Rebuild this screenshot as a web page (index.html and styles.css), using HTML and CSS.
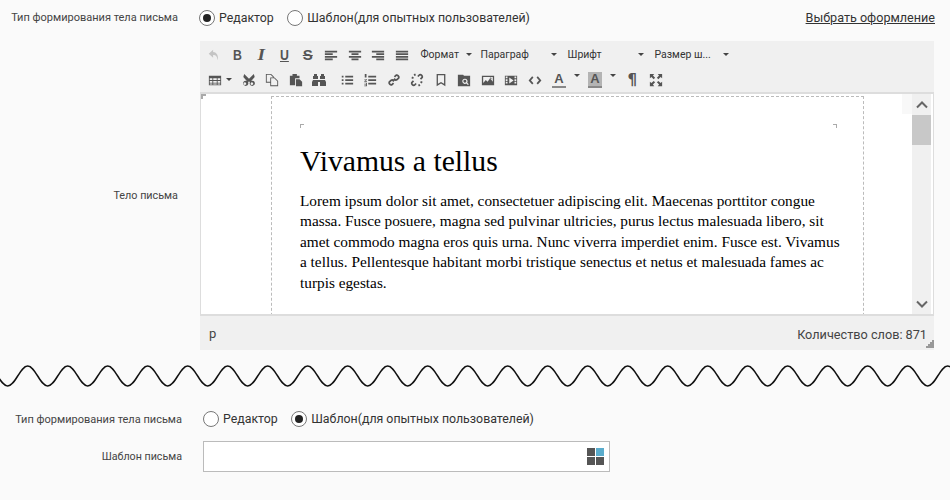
FILE: index.html
```html
<!DOCTYPE html>
<html lang="ru">
<head>
<meta charset="utf-8">
<title>Тело письма</title>
<link rel="stylesheet" href="styles.css">
</head>
<body>
<section class="top">
  <div class="row row-type">
    <div class="label">Тип формирования тела письма</div>
    <label class="radio"><span class="dot on"></span>Редактор</label>
    <label class="radio"><span class="dot"></span>Шаблон(для опытных пользователей)</label>
    <a class="link" href="#">Выбрать оформление</a>
  </div>
  <div class="row row-body">
    <div class="label label-body">Тело письма</div>
    <div class="editor">
      <div class="toolbar">
        <div class="tb-row">
          <span class="btn off"><svg viewBox="0 0 16 16"><path d="M7 2 2 6.500 7 11V8c3 0 4.500 1 5 6 1.500-5-.5-9-5-9.500z"/></svg></span>
          <span class="btn glyph"><b class="narrow">B</b></span>
          <span class="btn glyph"><b class="slant">I</b></span>
          <span class="btn glyph"><b class="u narrow">U</b></span>
          <span class="btn glyph"><b class="s">S</b></span>
          <span class="btn"><svg viewBox="0 0 16 16"><path d="M1 3h14v2H1zM1 6h9v2H1zM1 9h14v2H1zM1 12h9v2H1z"/></svg></span>
          <span class="btn"><svg viewBox="0 0 16 16"><path d="M1 3h14v2H1zM4 6h8v2H4zM1 9h14v2H1zM4 12h8v2H4z"/></svg></span>
          <span class="btn"><svg viewBox="0 0 16 16"><path d="M1 3h14v2H1zM6 6h9v2H6zM1 9h14v2H1zM6 12h9v2H6z"/></svg></span>
          <span class="btn"><svg viewBox="0 0 16 16"><path d="M1 3h14v2H1zM1 6h14v2H1zM1 9h14v2H1zM1 12h14v2H1z"/></svg></span>
          <span class="list list-a">Формат<i class="caret"></i></span>
          <span class="list list-b">Параграф<i class="caret"></i></span>
          <span class="list list-c">Шрифт<i class="caret"></i></span>
          <span class="list list-d">Размер ш...<i class="caret"></i></span>
        </div>
        <div class="tb-row">
          <span class="btn split-t"><svg viewBox="0 0 16 16"><path fill-rule="evenodd" d="M1 3h14v11H1zM2 6v2h3V6zm4 0v2h4V6zm5 0v2h3V6zM2 9v2h3V9zm4 0v2h4V9zm5 0v2h3V9zM2 12v1h3v-1zm4 0v1h4v-1zm5 0v1h3v-1z"/></svg><i class="caret"></i></span>
          <span class="btn"><svg viewBox="0 0 16 16"><path fill-rule="evenodd" d="M2.500 1 8 6.500 13.500 1l1 3.500L10.500 9a3 3 0 1 1-1.500 1.500L8 9.500l-1 1A3 3 0 1 1 5.500 9l-4-4.500zM4 10.800a1.500 1.500 0 1 0 0 2.700 1.500 1.500 0 0 0 0-2.700zm8 0a1.500 1.500 0 1 0 0 2.700 1.500 1.500 0 0 0 0-2.700z"/></svg></span>
          <span class="btn"><svg viewBox="0 0 16 16"><path fill-rule="evenodd" d="M1 1h6l3 3v1h1l4 4v6H6v-4H1zm1 1v8h4V5h3V4.500L6.500 2zm5 4v8h7V9.500L10.500 6z"/></svg></span>
          <span class="btn"><svg viewBox="0 0 16 16"><path d="M1 3h3V1h5v2h3v3H7v8H1z"/><path d="M8 7h4l3 3v5H8z"/></svg></span>
          <span class="btn"><svg class="wide" viewBox="0 0 16 16"><path d="M3 2h3v2h1v3H2v-3h1zM10 2h3v2h1v3H9V4h1zM2 8h5v6H1V10zM9 8h5l1 2v4H9zM7 8h2v2H7z"/></svg></span>
          <span class="btn list-start"><svg viewBox="0 0 16 16"><path d="M6 3h9v2H6zM6 7h9v2H6zM6 11h9v2H6zM2 3h2v2H2zM2 7h2v2H2zM2 11h2v2H2z"/></svg></span>
          <span class="btn"><svg viewBox="0 0 16 16"><path d="M6 3h9v2H6zM6 7h9v2H6zM6 11h9v2H6zM2 1h2v4H2zM1.500 7h3v1l-2 1.200h2V10h-3V9l2-1.200h-2zM1.500 11h3v4h-3v-.8h2v-.8h-2v-.6h2v-1h-2z"/></svg></span>
          <span class="btn"><svg viewBox="0 0 16 16"><path class="line" d="M6.500 9.500l3-3M8.500 4.500l2-2a2.500 2.500 0 0 1 3 3l-2 2a2.500 2.500 0 0 1-3 0M7.500 11.500l-2 2a2.500 2.500 0 0 1-3-3l2-2a2.500 2.500 0 0 1 3 0"/></svg></span>
          <span class="btn"><svg viewBox="0 0 16 16"><path class="line" d="M9 4l2-2a2.500 2.500 0 0 1 3 3l-2 2M7 12l-2 2a2.500 2.500 0 0 1-3-3l2-2M2 5l2 1M5 1l1 2M14 11l-2-1M11 15l-1-2"/></svg></span>
          <span class="btn"><svg viewBox="0 0 16 16"><path fill-rule="evenodd" d="M3 1h10v14l-5-3-5 3zm1.500 1.500v9.800L8 10.300l3.500 2V2.500z"/></svg></span>
          <span class="btn"><svg viewBox="0 0 16 16"><path fill-rule="evenodd" d="M1 2h6l1 1h7v12H1zm8 4.500a3 3 0 1 0 1.700 5.500l1.800 1.800 1-1-1.800-1.800A3 3 0 0 0 9 6.500zm0 1.300a1.700 1.700 0 1 1 0 3.400 1.700 1.700 0 0 1 0-3.400z"/></svg></span>
          <span class="btn"><svg viewBox="0 0 16 16"><path fill-rule="evenodd" d="M1 3h14v11H1zm1.500 1.500v7l3-3.500 2 2 3-4 3 4v-5.500zM11 5a1 1 0 1 0 0 2 1 1 0 0 0 0-2z"/></svg></span>
          <span class="btn"><svg viewBox="0 0 16 16"><path fill-rule="evenodd" d="M1 3h14v11H1zm1 1v2h2V4zm0 3v2h2V7zm0 3v2h2v-2zm10-6v2h2V4zm0 3v2h2V7zm0 3v2h2v-2zM6 5v7l5-3.500z"/></svg></span>
          <span class="btn"><svg viewBox="0 0 16 16"><path class="line" d="M5.500 4.500 2 8.500l3.500 4M10.500 4.500l3.500 4-3.500 4"/></svg></span>
          <span class="btn split-a"><span class="letter">A</span><i class="caret caret-up"></i></span>
          <span class="btn split-h"><span class="letter mark">A</span><i class="caret caret-up"></i></span>
          <span class="btn glyph"><b class="para">¶</b></span>
          <span class="btn"><svg viewBox="0 0 16 16"><path d="M1 1h5L4.500 2.800 7 5.300 5.300 7 2.800 4.500 1 6zM15 1v5l-1.800-1.500L10.700 7 9 5.300l2.500-2.500L10 1zM1 15v-5l1.800 1.500L5.300 9 7 10.700l-2.500 2.500L6 15zM15 15h-5l1.500-1.800L9 10.700 10.700 9l2.500 2.500L15 10z"/></svg></span>
        </div>
      </div>
      <div class="frame">
        <i class="frame-corner"></i>
        <i class="sb-patch"></i>
        <div class="canvas">
          <div class="page">
            <i class="crop crop-l"></i><i class="crop crop-r"></i>
            <h1>Vivamus a tellus</h1>
            <p>Lorem ipsum dolor sit amet, consectetuer adipiscing elit. Maecenas porttitor congue massa. Fusce posuere, magna sed pulvinar ultricies, purus lectus malesuada libero, sit amet commodo magna eros quis urna. Nunc viverra imperdiet enim. Fusce est. Vivamus a tellus. Pellentesque habitant morbi tristique senectus et netus et malesuada fames ac turpis egestas.</p>
          </div>
        </div>
        <div class="scrollbar">
          <span class="sb-btn sb-up"><svg viewBox="0 0 12 8"><path d="M1 6.500 6 1.500l5 5"/></svg></span>
          <span class="sb-thumb"></span>
          <span class="sb-track"></span>
          <span class="sb-btn"><svg viewBox="0 0 12 8"><path d="M1 1.500l5 5 5-5"/></svg></span>
        </div>
      </div>
      <div class="status">
        <span class="path">p</span>
        <span class="count">Количество слов: 871</span>
        <svg class="grip" viewBox="0 0 9 9"><path d="M7 1h2v2H7zM5 3h2v2H5zM7 3h2v2H7zM3 5h2v2H3zM5 5h2v2H5zM7 5h2v2H7zM1 7h2v2H1zM3 7h2v2H3zM5 7h2v2H5zM7 7h2v2H7z"/></svg>
      </div>
    </div>
  </div>
</section>
<svg class="wave" width="950" height="26" aria-hidden="true">
  <defs><pattern id="w" width="40" height="26" patternUnits="userSpaceOnUse"><path d="M-12.300 3C-5 3 0 23 7.700 23S20 3 27.700 3 40 23 47.700 23"/></pattern></defs>
  <rect width="950" height="26" fill="url(#w)"/>
</svg>
<section class="bottom">
  <div class="row row-type2">
    <div class="label">Тип формирования тела письма</div>
    <label class="radio"><span class="dot"></span>Редактор</label>
    <label class="radio"><span class="dot on"></span>Шаблон(для опытных пользователей)</label>
  </div>
  <div class="row row-tpl">
    <div class="label">Шаблон письма</div>
    <div class="picker">
      <span class="tiles"><i></i><i class="blue"></i><i></i><i></i></span>
    </div>
  </div>
</section>
</body>
</html>
```
FILE: styles.css
```css
* { box-sizing: border-box; }
html, body { margin: 0; height: 100%; }
body {
  width: 950px;
  height: 500px;
  overflow: hidden;
  background: #fafafa;
  color: #333;
  font-family: Roboto, "Liberation Sans", sans-serif;
}
.row { display: flex; align-items: center; }
.label { font-size: 11px; color: #444; text-align: right; flex: none; }
.top .label { width: 178px; margin-right: 21px; }
.top .label-body { margin-right: 22px; margin-top: 148px; font-size: 10.800px; }
.row-type { height: 41px; padding-bottom: 6px; padding-right: 15px; }
.row-body { align-items: flex-start; }
.radio { display: flex; align-items: center; gap: 4px; font-size: 12.350px; color: #333; margin-right: 13.500px; }
.dot {
  width: 16px; height: 16px; border-radius: 50%;
  border: 1px solid #777; background: #fff; position: relative; flex: none;
}
.dot.on::after {
  content: ""; position: absolute; left: 3px; top: 3px;
  width: 8px; height: 8px; border-radius: 50%; background: #222;
}
.link { margin-left: auto; font-size: 12.600px; color: #333; text-decoration: underline; }

.editor { width: 734px; height: 309px; display: flex; flex-direction: column; }
.toolbar { height: 52px; background: #f0f0f0; padding: 1px 0 0 2px; border-bottom: 1px solid #ddd; }
.tb-row { display: flex; align-items: center; height: 25px; }
.btn { width: 23.500px; height: 24px; display: flex; align-items: center; justify-content: center; flex: none; }
.btn svg { width: 14px; height: 14px; fill: #555; display: block; }
.btn svg.wide { width: 16px; height: 16px; }
.btn.off svg { fill: #c4c4c4; }
.btn .line { fill: none; stroke: #555; stroke-width: 2; }
.list-start { margin-left: 4px; }
.glyph b { font: bold 15px "Liberation Sans", sans-serif; color: #555; }
.glyph .narrow { transform: scaleX(.82); }
.glyph .slant { font: italic bold 16px "Liberation Serif", serif; transform: scaleX(1.2); }
.glyph .u { text-decoration: underline; }
.glyph .s { text-decoration: line-through; }
.glyph .para { font: bold 15px "DejaVu Sans", sans-serif; }
.caret {
  display: inline-block; width: 0; height: 0; flex: none;
  border-left: 3.500px solid transparent; border-right: 3.500px solid transparent;
  border-top: 3.500px solid #444;
}
.caret-up { align-self: flex-start; margin-top: 6px; }
.list { display: flex; align-items: center; justify-content: space-between; font-size: 10.500px; color: #333; flex: none; height: 24px; padding-right: 11px; }
.list-a { width: 60px; margin-left: 7px; padding-right: 9px; }
.list-b { width: 87px; padding-right: 11px; }
.list-c { width: 87px; padding-right: 11px; }
.list-d { width: 77px; padding-right: 3px; }
.split-t { width: 35px; gap: 4px; }
.split-a { width: 36px; gap: 8px; margin-left: 1.500px; }
.split-h { width: 37px; gap: 8px; margin-left: -.500px; }
.letter {
  width: 14px; height: 16px; display: block; text-align: center;
  font: bold 13px/14px "Liberation Sans", sans-serif; color: #555;
  border-bottom: 2px solid #888;
}
.letter.mark { background: #b4b4b4; }

.frame { height: 223px; background: #fff; border: 1px solid #ddd; border-bottom-width: 2px; display: flex; position: relative; overflow: hidden; }
.frame-corner { position: absolute; left: 0; top: 0; width: 5px; height: 5px; border-left: 2px solid #aaa; border-top: 2px solid #aaa; }
.sb-patch { position: absolute; right: 21px; top: 0; width: 10px; height: 20px; background: #f8f8f8; }
.canvas { flex: 1; padding: 2px 0 0 70px; overflow: hidden; }
.page { width: 593px; height: 230px; border: 1px dashed #bbb; padding: 47px 22px 0 28px; position: relative; font-family: "Liberation Serif", serif; color: #000; }
.crop { position: absolute; top: 27px; width: 4px; height: 4px; border-top: 1px solid #aaa; }
.crop-l { left: 28px; border-left: 1px solid #aaa; }
.crop-r { right: 26px; border-right: 1px solid #aaa; }
.page h1 { margin: 0; font-size: 29.700px; line-height: 34px; font-weight: 400; }
.page p { margin: 13px 0 0; font-size: 15.300px; line-height: 20.400px; }
.scrollbar { width: 19px; margin-right: 2px; display: flex; flex-direction: column; background: #f0f0f0; flex: none; }
.sb-btn { height: 20px; display: flex; align-items: center; justify-content: center; flex: none; }
.sb-up { height: 21px; }
.sb-btn svg { width: 12px; height: 8px; fill: none; stroke: #666; stroke-width: 2; }
.sb-thumb { height: 30px; background: #c8c8c8; flex: none; }
.sb-track { flex: 1; }
.status { height: 34px; width: 734px; background: #f0f0f0; display: flex; align-items: center; justify-content: space-between; padding: 0 7px 0 9px; font-size: 12.700px; color: #444; position: relative; }
.count { padding-top: 3px; }
.path { font-size: 13px; }
.grip { position: absolute; right: 0; bottom: 2px; width: 9px; height: 9px; fill: #999; }

.wave { display: block; margin-top: 13px; }
.wave path { fill: none; stroke: #111; stroke-width: 1.500; }
.bottom { padding-top: 17px; }
.bottom .label { width: 182px; margin-right: 21px; }
.bottom .row-tpl .label { font-size: 10.700px; }
.row-type2 { height: 26px; }
.row-tpl { height: 31px; margin-top: 9px; }
.picker { width: 407px; height: 31px; background: #fff; border: 1px solid #bbb; display: flex; align-items: center; justify-content: flex-end; padding-right: 5px; }
.tiles { display: grid; grid-template-columns: 8px 8px; grid-auto-rows: 8px; gap: 1px; }
.tiles i { background: #555; }
.tiles .blue { background: #5aaccc; }
```
